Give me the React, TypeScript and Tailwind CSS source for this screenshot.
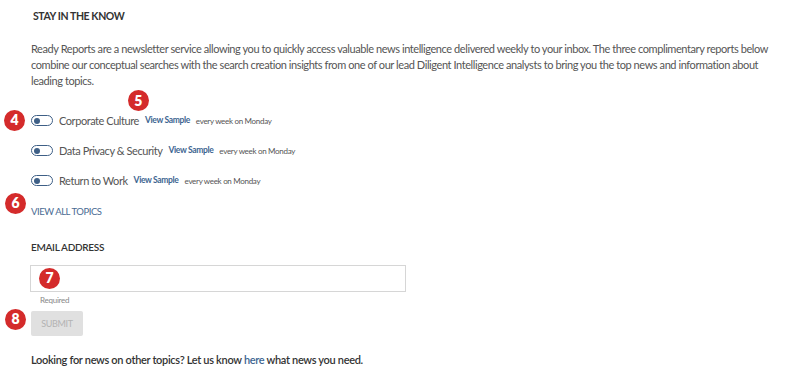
import React from 'react'

const topics = ['Corporate Culture', 'Data Privacy & Security', 'Return to Work']

function Badge({ n, className }: { n: number; className: string }) {
  return (
    <span
      className={`absolute flex h-[21px] w-[21px] items-center justify-center rounded-full bg-[#d42b2b] text-[14px] font-extrabold leading-none tracking-normal text-white ${className}`}
    >
      {n}
    </span>
  )
}

function Toggle() {
  return (
    <span className="flex h-[11px] w-[22px] shrink-0 items-center rounded-full border-[1.5px] border-[#3e5f86] px-[1.5px]">
      <span className="h-[6px] w-[6px] rounded-full bg-[#3e5f86]" />
    </span>
  )
}

export default function App() {
  return (
    <div className="relative h-[370px] w-[800px] bg-white font-['Lato','Noto_Sans',sans-serif] text-[#555]">
      <div className="flex flex-col pl-[31px] pr-[15px] pt-[9px]">
        <h2 className="pl-[2px] text-[10.5px] font-bold tracking-[-0.4px] text-[#333]">STAY IN THE KNOW</h2>
        <p className="mt-[16px] w-[750px] text-[11px] leading-[16px] tracking-[-0.42px]">
          Ready Reports are a newsletter service allowing you to quickly access valuable news intelligence
          delivered weekly to your inbox. The three complimentary reports below combine our conceptual searches
          with the search creation insights from one of our lead Diligent Intelligence analysts to bring you the
          top news and information about leading topics.
        </p>

        <div className="mt-[26px] flex flex-col gap-[18px]">
          {topics.map((t, i) => (
            <div key={t} className="relative flex h-[12px] items-center">
              {i === 0 && <Badge n={4} className="left-[-27px] top-[-5px]" />}
              <Toggle />
              <span className="ml-[6px] text-[11px] tracking-[-0.44px] text-[#555]">{t}</span>
              <a className="relative ml-[6px] text-[8.5px] font-bold tracking-[-0.35px] text-[#3d6591]">
                {i === 0 && <Badge n={5} className="left-[-17px] top-[-24px]" />}
                View Sample
              </a>
              <span className="ml-[6px] text-[8px] tracking-[-0.3px] text-[#555]">every week on Monday</span>
            </div>
          ))}
        </div>

        <div className="relative mt-[10px] h-[14px]">
          <Badge n={6} className="left-[-26px] top-[-4px]" />
          <a className="text-[9.5px] tracking-[-0.45px] text-[#4a6b93]">VIEW ALL TOPICS</a>
        </div>

        <div className="mt-[29px] text-[10px] font-semibold tracking-[-0.3px] text-[#333]">EMAIL ADDRESS</div>

        <div className="relative mt-[10px] h-[27px] w-[376px] -ml-[1px] border border-[#d6d6d6] bg-white">
          <Badge n={7} className="left-[8px] top-[2px]" />
        </div>
        <div className="mt-[2px] pl-[9px] text-[8px] tracking-[-0.25px] text-[#888]">Required</div>

        <div className="relative mt-[3px]">
          <Badge n={8} className="left-[-26px] top-[0px]" />
          <button className="h-[25px] w-[52px] rounded-[2px] bg-[#e0e0e0] text-[9px] tracking-[-0.3px] text-[#b3b3b3]">
            SUBMIT
          </button>
        </div>

        <p className="mt-[16px] text-[11px] font-semibold tracking-[-0.32px] text-[#333]">
          Looking for news on other topics? Let us know <a className="text-[#3d6591]">here</a> what news you need.
        </p>
      </div>
    </div>
  )
}
